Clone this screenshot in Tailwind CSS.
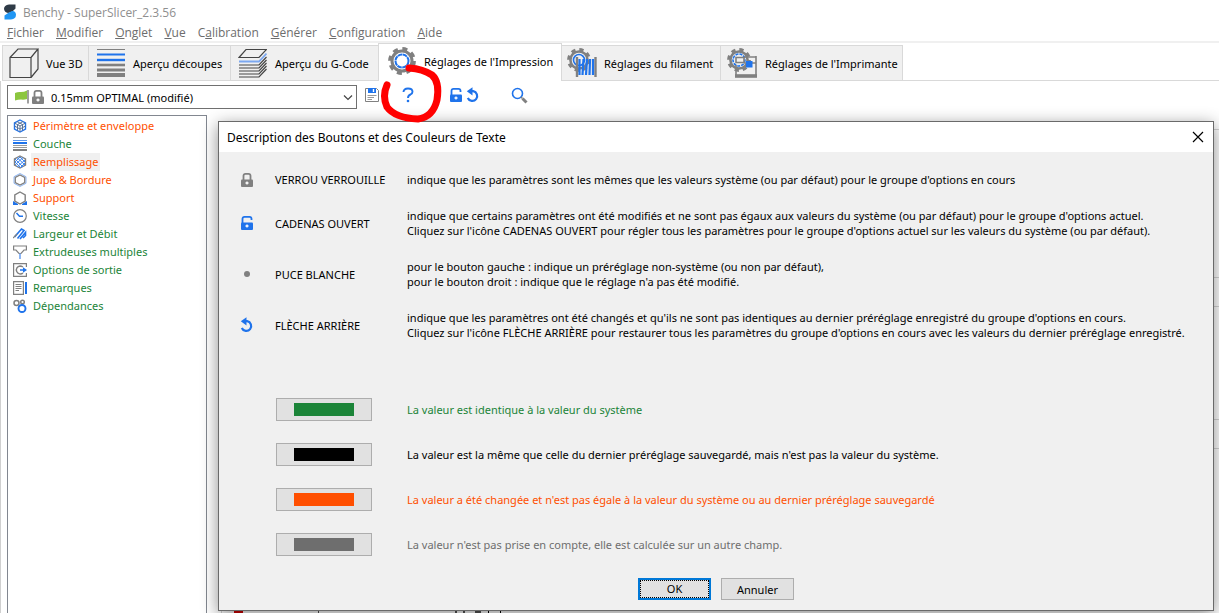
<!DOCTYPE html>
<html lang="fr">
<head>
<meta charset="utf-8">
<title>Benchy - SuperSlicer_2.3.56</title>
<script src="https://cdn.jsdelivr.net/npm/@tailwindcss/browser@4"></script>
</head>
<body class="h-screen overflow-hidden bg-white font-['Noto_Sans','Open_Sans',sans-serif] text-[11px] leading-[15px] text-black">
<svg class="hidden">
  <defs>
    <symbol id="lock" viewBox="0 0 14 16"><path d="M3.500 8V3.800Q3.500 1.800 5.500 1.800H8.500Q10.500 1.800 10.500 3.800V8" fill="none" stroke="currentColor" stroke-width="1.800"/><rect x="1" y="7.500" width="12" height="7.500" rx="1" fill="currentColor"/><path d="M7 9.500v3M5.500 11h3" stroke="#fff" stroke-width="1.300"/></symbol>
    <symbol id="unlock" viewBox="0 0 14 16"><path d="M2.500 8V3.800Q2.500 1.800 4.500 1.800H9.500Q11.500 1.800 11.500 3.800V5" fill="none" stroke="currentColor" stroke-width="1.800"/><rect x="1" y="7.500" width="12" height="7.500" rx="1" fill="currentColor"/><path d="M7 9.500v3M5.500 11h3" stroke="#fff" stroke-width="1.300"/></symbol>
    <symbol id="undo" viewBox="0 0 14 16"><path d="M4 4.200H7.200A4.900 4.900 0 1 1 1.800 11" fill="none" stroke="currentColor" stroke-width="2.200"/><path d="M.8 4.300L6.500 .2V8.400z" fill="currentColor"/></symbol>
    <symbol id="gear" viewBox="0 0 28 28"><circle cx="14" cy="14" r="12.200" fill="none" stroke="#808080" stroke-width="3.400" stroke-dasharray="5 4.582"/><circle cx="14" cy="14" r="10" fill="none" stroke="#808080" stroke-width="3"/></symbol>
    <symbol id="layers" viewBox="0 0 28 28"><path d="M0 .5H28" stroke="#808080"/><path d="M0 5.500H28" stroke="#1f73eb" stroke-width="2"/><path d="M0 11H28" stroke="#1f73eb" stroke-width="2.400"/><path d="M0 16H28" stroke="#808080" stroke-width="2.600"/><path d="M0 21H28" stroke="#808080" stroke-width="3"/><path d="M0 26H28" stroke="#808080" stroke-width="4"/></symbol>
    <symbol id="layers-small" viewBox="0 0 14 14"><path d="M0 .5H14" stroke="#aaa"/><path d="M0 3.500H14" stroke="#5b97ee"/><path d="M0 6H14" stroke="#1f73eb" stroke-width="2"/><path d="M0 8.500H14M0 10.500H14" stroke="#999"/><path d="M0 13H14" stroke="#808080" stroke-width="2"/></symbol>
    <symbol id="hex" viewBox="0 0 14 14"><path d="M7 1L12.200 4V10L7 13L1.800 10V4z" fill="none" stroke="currentColor" stroke-width="1.400"/></symbol>
  </defs>
</svg>
<div class="flex h-full flex-col">
  <header class="font-['Open_Sans','Noto_Sans',sans-serif] text-[12px]">
    <div class="flex h-[24px] items-center gap-[6px] pl-[3px] text-[#8f8f8f]">
      <svg class="h-[16px] w-[14px]" viewBox="0 0 14 16"><path d="M12.500 .5H6Q1 1 1 5Q1.500 8.500 5 9Q9 8.500 12.500 4.500z" fill="#2f3b47"/><path d="M1.500 15.500H8Q13 15 13 10.500Q12.500 6.500 9 7Q5 8.500 1.500 11.500z" fill="#2196f3"/></svg>
      <h1>Benchy - SuperSlicer_2.3.56</h1>
    </div>
    <nav class="flex h-[17px] items-center gap-[12px] pl-[7px] text-[#6d6d6d]">
      <a href="#"><u>F</u>ichier</a><a href="#"><u>M</u>odifier</a><a href="#"><u>O</u>nglet</a><a href="#"><u>V</u>ue</a><a href="#">C<u>a</u>libration</a><a href="#"><u>G</u>énérer</a><a href="#"><u>C</u>onfiguration</a><a href="#"><u>A</u>ide</a>
    </nav>
  </header>
  <div role="tablist" class="flex h-[40px] items-end border-t-2 border-[#f0f0f0] pl-[2px]">
    <button role="tab" class="flex h-[36px] w-[87px] items-center gap-[7px] border border-[#d9d9d9] bg-[#f0f0f0] pl-[6px] whitespace-nowrap">
      <svg class="size-[30px] shrink-0" viewBox="0 0 30 30" fill="none" stroke="#444" stroke-width="1.200"><path d="M1 9.500H22V29.500H1zM1 9.500L9 1H29L22 9.500M29 1V21L22 29.500"/></svg>Vue 3D</button>
    <button role="tab" class="flex h-[36px] w-[142px] items-center gap-[8px] border-y border-r border-[#d9d9d9] bg-[#f0f0f0] pl-[8px] whitespace-nowrap">
      <svg class="size-[28px] shrink-0"><use href="#layers"/></svg>Aperçu découpes</button>
    <button role="tab" class="flex h-[36px] w-[147px] items-center gap-[8px] border-y border-[#d9d9d9] bg-[#f0f0f0] pl-[7px] whitespace-nowrap">
      <svg class="h-[30px] w-[29px] shrink-0" viewBox="0 0 29 30" fill="none" stroke="#444" stroke-width="1.200"><path d="M1 9.500L8 1.500H28.500L21 9.500z"/><path d="M1 13.500H21L28.500 5.500" stroke="#7ba7f0" stroke-width="1.800"/><path d="M1 17H21L28.500 9M1 20H21L28.500 12M1 23H21L28.500 15M1 26H21L28.500 18M1 29H21L28.500 21"/></svg>Aperçu du G-Code</button>
    <button role="tab" aria-selected="true" class="flex h-[38px] w-[184px] items-center gap-[8px] border-x border-t border-[#d9d9d9] bg-white pb-[3px] pl-[9px] whitespace-nowrap">
      <svg class="size-[28px] shrink-0" viewBox="0 0 28 28"><use href="#gear"/><circle cx="14" cy="14" r="6.500" fill="none" stroke="#1f73eb" stroke-width="2" stroke-dasharray="4.600 .5"/></svg>Réglages de l'Impression</button>
    <button role="tab" class="flex h-[36px] w-[159px] items-center gap-[7px] border-y border-r border-[#d9d9d9] bg-[#f0f0f0] pl-[5px] whitespace-nowrap">
      <svg class="h-[30px] w-[30px] shrink-0" viewBox="0 0 30 30"><svg x="0" y="0" width="24" height="24"><use href="#gear"/></svg><circle cx="12" cy="12" r="5.500" fill="none" stroke="#1f73eb" stroke-width="1.600"/><path d="M10 9V29M28.500 9V29" stroke="#808080" stroke-width="2.400"/><path d="M12.500 27V11M15.500 27L16.500 11M19 27L20 11M22.500 27L23 11M26 27V11" fill="none" stroke="#1f73eb" stroke-width="2.200"/></svg>Réglages du filament</button>
    <button role="tab" class="flex h-[36px] w-[182px] items-center gap-[8px] border-y border-r border-[#d9d9d9] bg-[#f0f0f0] pl-[6px] whitespace-nowrap">
      <svg class="h-[30px] w-[30px] shrink-0" viewBox="0 0 30 30"><svg x="0" y="0" width="24" height="24"><use href="#gear"/></svg><circle cx="12" cy="12" r="6" fill="none" stroke="#1f73eb" stroke-width="1.600" stroke-dasharray="3 1"/><path d="M9 17V28M29 8V28M17 9H29M17 15H29M9 9.500h8v5H9z" fill="none" stroke="#808080" stroke-width="1.600"/><path d="M8 28H30" stroke="#808080" stroke-width="3.600"/><rect x="19" y="13" width="6.500" height="6.500" fill="#1f73eb"/></svg>Réglages de l'Imprimante</button>
    <div class="h-full flex-1 border-b border-[#d9d9d9]"></div>
  </div>
  <main class="flex min-h-0 flex-1 flex-col border-l border-[#d0d0d0] pl-[6px]">
    <div class="flex h-[34px] shrink-0 items-center pb-[6px] text-[#1f73eb]">
      <label class="relative mt-[4px] mr-[8px] w-[350px]">
        <select aria-label="Préréglage" class="block h-[24px] w-full appearance-none border border-[#707070] bg-white pl-[43px] text-black"><option>0.15mm OPTIMAL (modifié)</option></select>
        <svg class="pointer-events-none absolute top-[5px] left-[8px] h-[14px] w-[14px]" viewBox="0 0 14 14"><path d="M0 3Q3 1.500 6 2Q9 2 12 .5V9Q9 10 6 9.500Q3 9.500 0 10.500z" fill="#8cc63f"/><path d="M13 0V13.500" stroke="#808080" stroke-width="1.500"/></svg>
        <svg class="pointer-events-none absolute top-[4px] left-[24px] h-[16px] w-[14px] text-[#808080]"><use href="#lock"/></svg>
        <svg class="pointer-events-none absolute top-[9px] right-[4px] h-[7px] w-[10px]" viewBox="0 0 10 7"><path d="M1 1.500L5 5.500L9 1.500" fill="none" stroke="#444" stroke-width="1.200"/></svg>
      </label>
      <button aria-label="Enregistrer"><svg class="size-[14px]" viewBox="0 0 14 14"><path d="M.5 .5H11.500L13.500 2.500V13.500H.5z" fill="#fff" stroke="#808080"/><path d="M3 0H11V5H3z" fill="#1f73eb"/><path d="M8.500 1V4" stroke="#fff" stroke-width="1.400"/><path d="M2.500 7.500H11.500M2.500 9.500H9M2.500 11.500H7" stroke="#999"/></svg></button>
      <button aria-label="Aide" class="ml-[23px]"><svg class="h-[16px] w-[12px]" viewBox="0 0 12 16"><path d="M1.500 5Q1.500 1.500 6 1.500Q10.500 1.500 10.500 4.800Q10.500 6.500 8.500 7.500Q6 8.500 6 11" fill="none" stroke="currentColor" stroke-width="1.900"/><circle cx="6" cy="14" r="1.300" fill="currentColor"/></svg></button>
      <button aria-label="Cadenas" class="ml-[35px]"><svg class="h-[16px] w-[14px]"><use href="#unlock"/></svg></button>
      <button aria-label="Restaurer" class="ml-[3px]"><svg class="h-[16px] w-[14px]"><use href="#undo"/></svg></button>
      <button aria-label="Rechercher" class="ml-[31px]"><svg class="size-[17px]" viewBox="0 0 17 17"><circle cx="6.500" cy="6.500" r="5" fill="none" stroke="#1f73eb" stroke-width="1.600"/><path d="M10 10L11.500 11.500" stroke="#808080" stroke-width="1.500"/><path d="M11.500 11.500L15.500 15.500" stroke="#808080" stroke-width="3"/></svg></button>
    </div>
    <div class="flex min-h-0 flex-1 gap-[14px]">
      <ul class="w-[200px] shrink-0 border border-b-0 border-[#828790] bg-white pt-[1px] pl-[5px] leading-[18px] text-[#1b8438] *:flex *:h-[18px] *:items-center *:gap-[4px]">
        <li class="text-[#ff4f00]"><svg class="size-[14px]" viewBox="0 0 14 14" fill="none"><path d="M7 1L12.500 4V10L7 13L1.500 10V4z" stroke="#1f73eb" stroke-width="1.400"/><path d="M1.500 4L7 7L12.500 4M7 7V13M4 2.500L9.500 5.500V11.500M10 2.500L4.500 5.500V11.500M1.500 7L7 10L12.500 7" stroke="#5c7396"/></svg><a href="#" class="px-[2px]">Périmètre et enveloppe</a></li>
        <li><svg class="size-[14px]"><use href="#layers-small"/></svg><a href="#" class="px-[2px]">Couche</a></li>
        <li class="text-[#ff4f00]"><svg class="size-[14px]" viewBox="0 0 14 14" fill="none"><path d="M7 1L12.500 4V10L7 13L1.500 10V4z" stroke="#808080" stroke-width="1.400"/><path d="M2 7L7 2M2 10L10 2.500M4 12L12 5M7 13L12 8M2 7L7 12M2 4L10 12M4 2.500L12 10M7 2L12 7" stroke="#3f86ee"/></svg><a href="#" class="bg-[#f0f0f0] px-[2px]">Remplissage</a></li>
        <li class="text-[#ff4f00]"><svg class="size-[14px]" viewBox="0 0 14 14" fill="none"><path d="M7 .5L13 3.700V10.300L7 13.500L1 10.300V3.700z" stroke="#8db6f5"/><path d="M7 2L11.700 4.500V9.500L7 12L2.300 9.500V4.500z" stroke="#808080" stroke-width="1.300"/></svg><a href="#" class="px-[2px]">Jupe &amp; Bordure</a></li>
        <li class="text-[#ff4f00]"><svg class="size-[14px]" viewBox="0 0 14 14"><path d="M0 10L5 13V14H0zM14 10L9 13V14H14z" fill="#1f73eb"/><svg width="14" height="14" color="#808080"><use href="#hex"/></svg></svg><a href="#" class="px-[2px]">Support</a></li>
        <li><svg class="size-[14px]" viewBox="0 0 14 14" fill="none"><circle cx="7" cy="7" r="6.300" stroke="#808080" stroke-width="1.200"/><path d="M3.500 4L6.500 7.200H10" stroke="#1f73eb" stroke-width="1.500"/></svg><a href="#" class="px-[2px]">Vitesse</a></li>
        <li><svg class="size-[14px]" viewBox="0 0 14 14" fill="none" stroke="#1f73eb" stroke-width="1.600"><path d="M1.500 10L8.500 2L11 3.500L4.500 11.500M7 12L12.500 5.500V8.500L10 11"/><path d="M0 11L4 7" stroke="#808080" stroke-width="1.200"/></svg><a href="#" class="px-[2px]">Largeur et Débit</a></li>
        <li><svg class="size-[14px]" viewBox="0 0 14 14" fill="none"><path d="M.6 1H13.400V5H11L8 8.500H6L3 5H.6z" stroke="#808080" stroke-width="1.200"/><path d="M7 8.500V14" stroke="#6fa3f2" stroke-width="1.600"/></svg><a href="#" class="px-[2px]">Extrudeuses multiples</a></li>
        <li><svg class="size-[14px]" viewBox="0 0 14 14" fill="none"><path d="M13.400 4V.6H.6V13.400H13.400V10" stroke="#808080" stroke-width="1.200"/><path d="M10 4Q8.500 3 7 3A4 4 0 1 0 10 10" stroke="#808080" stroke-width="1.400"/><path d="M7 7H11" stroke="#1f73eb" stroke-width="1.500"/><path d="M10 4.200L14 7L10 9.800z" fill="#1f73eb"/></svg><a href="#" class="px-[2px]">Options de sortie</a></li>
        <li><svg class="size-[14px]" viewBox="0 0 14 14" fill="none"><path d="M.6 .6H10.400V13.400H.6z" stroke="#808080" stroke-width="1.200"/><path d="M2.500 3.500H8.500M2.500 5.500H8.500M2.500 7.500H8.500M2.500 9.500H6" stroke="#808080"/><path d="M13 1V13" stroke="#1f73eb" stroke-width="2"/></svg><a href="#" class="px-[2px]">Remarques</a></li>
        <li><svg class="size-[14px]" viewBox="0 0 14 14" fill="none"><circle cx="3.500" cy="4" r="2.500" stroke="#808080" stroke-width="1.500"/><circle cx="9.500" cy="3" r="1.800" stroke="#808080" stroke-width="1.500"/><circle cx="9" cy="9.500" r="3.500" stroke="#1f73eb" stroke-width="1.900"/></svg><a href="#" class="px-[2px]">Dépendances</a></li>
      </ul>
      <div class="flex flex-1 flex-col pt-[14px]">
        <div class="h-[149px] border-y border-[#d5d5d5]"></div>
        <div class="mt-[28px] h-[114px] border-y border-[#d5d5d5]"></div>
        <div class="mt-[28px] flex flex-1 items-end border-t border-l border-[#d5d5d5] pl-[12px]">
          <div class="h-[4px] w-[9px] bg-[#d00000]"></div>
          <div class="ml-[75px] h-[4px] w-[1px] bg-[#555]"></div>
          <div class="ml-[136px] h-[4px] w-[2px] bg-[#555]"></div>
          <div class="ml-[6px] h-[4px] w-[2px] bg-[#555]"></div>
          <div class="ml-[10px] h-[4px] w-[6px] bg-[#555]"></div>
          <div class="ml-[7px] h-[4px] w-[1px] bg-black"></div>
          <div class="ml-[11px] h-[4px] w-[1px] bg-black"></div>
        </div>
      </div>
    </div>
  </main>
</div>

<section role="dialog" aria-labelledby="dlg-title" class="absolute top-[121px] right-[5px] bottom-[2px] left-[218px] flex flex-col border border-[#6a6a6a] bg-[#f0f0f0] shadow-[0_4px_16px_rgba(0,0,0,0.45)]">
  <div class="flex h-[30px] shrink-0 items-center justify-between bg-white pr-[9px] pl-[8px]">
    <h2 id="dlg-title" class="text-[12px]">Description des Boutons et des Couleurs de Texte</h2>
    <button aria-label="Fermer"><svg class="size-[12px]" viewBox="0 0 12 12"><path d="M1 1L11 11M11 1L1 11" stroke="#000" stroke-width="1.200"/></svg></button>
  </div>
  <div class="grid grid-cols-[56px_132px_1fr] items-center gap-y-[21px] pt-[20px] whitespace-nowrap">
    <svg class="-my-px ml-[21px] h-[16px] w-[14px] text-[#808080]"><use href="#lock"/></svg><span>VERROU VERROUILLE</span><p>indique que les paramètres sont les mêmes que les valeurs système (ou par défaut) pour le groupe d'options en cours</p>
    <svg class="ml-[21px] h-[16px] w-[14px] text-[#1f73eb]"><use href="#unlock"/></svg><span>CADENAS OUVERT</span><p>indique que certains paramètres ont été modifiés et ne sont pas égaux aux valeurs du système (ou par défaut) pour le groupe d'options actuel.<br>Cliquez sur l'icône CADENAS OUVERT pour régler tous les paramètres pour le groupe d'options actuel sur les valeurs du système (ou par défaut).</p>
    <i class="ml-[25px] size-[6px] rounded-full bg-[#808080]"></i><span>PUCE BLANCHE</span><p>pour le bouton gauche : indique un préréglage non-système (ou non par défaut),<br>pour le bouton droit : indique que le réglage n'a pas été modifié.</p>
    <svg class="ml-[21px] h-[16px] w-[14px] text-[#1f73eb]"><use href="#undo"/></svg><span>FLÈCHE ARRIÈRE</span><p>indique que les paramètres ont été changés et qu'ils ne sont pas identiques au dernier préréglage enregistré du groupe d'options en cours.<br>Cliquez sur l'icône FLÈCHE ARRIÈRE pour restaurer tous les paramètres du groupe d'options en cours avec les valeurs du dernier préréglage enregistré.</p>
  </div>
  <div class="mt-[58px] flex flex-col gap-[22px] pl-[57px] whitespace-nowrap">
    <div class="flex items-center gap-[35px] text-[#1b8438]"><button aria-label="Couleur système" class="flex h-[23px] w-[96px] items-center justify-center border border-[#adadad] bg-[#e1e1e1]"><span class="h-[13px] w-[60px] bg-[#1b8438]"></span></button><p>La valeur est identique à la valeur du système</p></div>
    <div class="flex items-center gap-[35px]"><button aria-label="Couleur sauvegardée" class="flex h-[23px] w-[96px] items-center justify-center border border-[#adadad] bg-[#e1e1e1]"><span class="h-[13px] w-[60px] bg-black"></span></button><p>La valeur est la même que celle du dernier préréglage sauvegardé, mais n'est pas la valeur du système.</p></div>
    <div class="flex items-center gap-[35px] text-[#ff4f00]"><button aria-label="Couleur modifiée" class="flex h-[23px] w-[96px] items-center justify-center border border-[#adadad] bg-[#e1e1e1]"><span class="h-[13px] w-[60px] bg-[#ff4f00]"></span></button><p>La valeur a été changée et n'est pas égale à la valeur du système ou au dernier préréglage sauvegardé</p></div>
    <div class="flex items-center gap-[35px] text-[#6e6e6e]"><button aria-label="Couleur ignorée" class="flex h-[23px] w-[96px] items-center justify-center border border-[#adadad] bg-[#e1e1e1]"><span class="h-[13px] w-[60px] bg-[#6e6e6e]"></span></button><p>La valeur n'est pas prise en compte, elle est calculée sur un autre champ.</p></div>
  </div>
  <div class="mt-[22px] flex justify-center gap-[10px]">
    <button class="h-[22px] w-[73px] border-2 border-[#0078d7] bg-[#e1e1e1]"><span class="block h-full border border-dotted border-black leading-[16px]">OK</span></button>
    <button class="h-[22px] w-[73px] border border-[#adadad] bg-[#e1e1e1]">Annuler</button>
  </div>
</section>

<svg class="pointer-events-none absolute top-[60px] left-[375px] h-[66px] w-[70px]" viewBox="0 0 70 66"><path d="M12 25Q7 36 12 47Q20 58 43 59Q58 57 62 40Q65 22 57 15Q48 9 34 8" fill="none" stroke="#ff0000" stroke-width="7" stroke-linecap="round" stroke-linejoin="round"/></svg>
</body>
</html>
